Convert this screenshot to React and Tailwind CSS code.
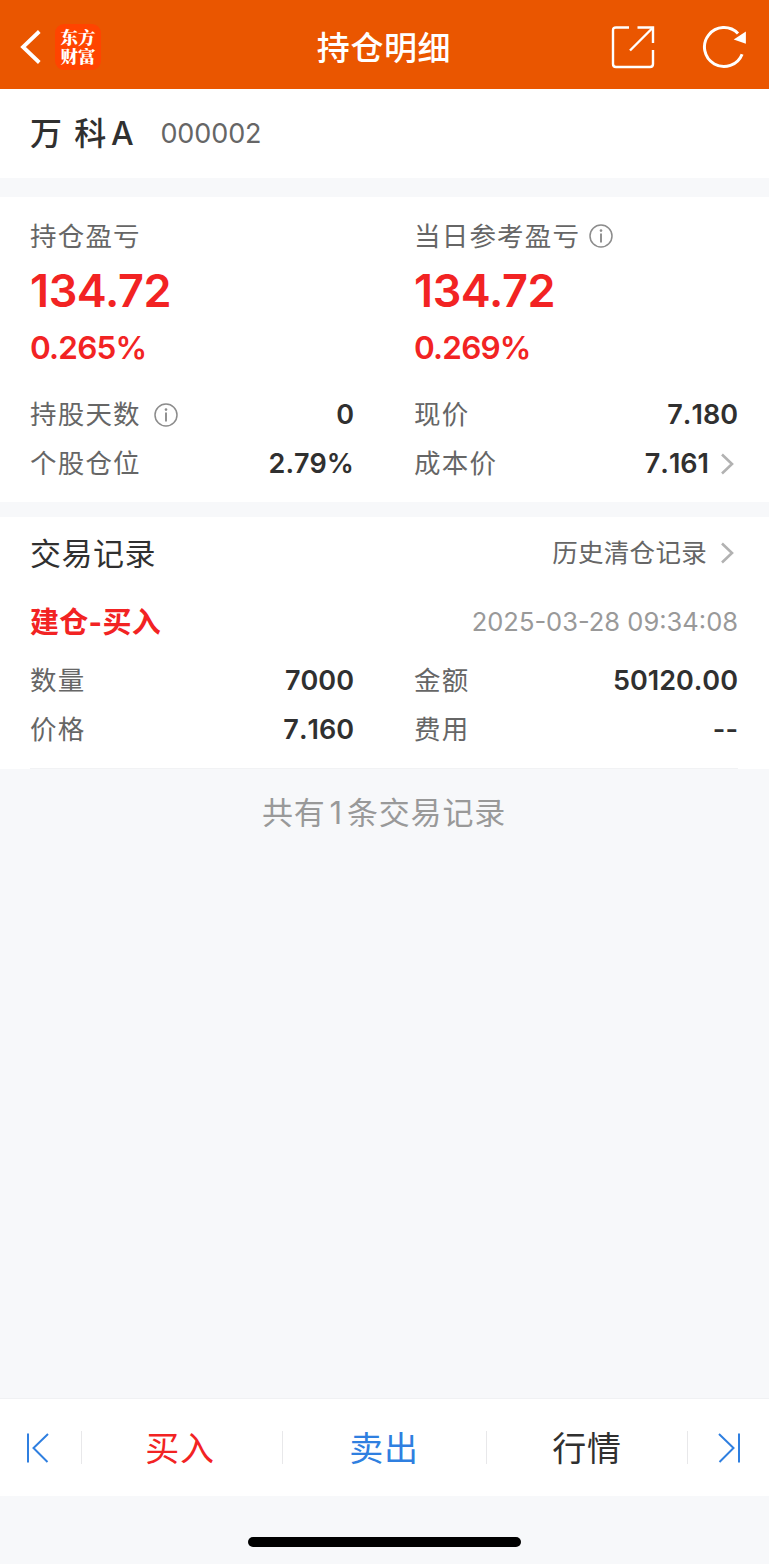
import React from "react";

function InfoIcon() {
  return (
    <svg width="24" height="24" viewBox="0 0 24 24" fill="none" className="shrink-0">
      <circle cx="12" cy="12" r="11" stroke="#8c8c8c" strokeWidth="1.5" />
      <circle cx="12" cy="6.6" r="1.3" fill="#8c8c8c" />
      <path d="M12 9.6V18.4" stroke="#8c8c8c" strokeWidth="1.9" />
    </svg>
  );
}

function Chevron() {
  return (
    <svg width="14" height="22" viewBox="0 0 14 22" fill="none" className="mr-1 shrink-0">
      <path d="M2 1.5L12 11L2 20.5" stroke="#b2b2b2" strokeWidth="2.6" />
    </svg>
  );
}

function Row({ label, value, info, chevron }) {
  return (
    <div className="flex h-[49px] items-center justify-between">
      <div className="flex items-center gap-[13px]">
        <span className="text-[26.5px] tracking-[1.2px] text-[#666]">{label}</span>
        {info && <InfoIcon />}
      </div>
      <div className="flex items-center gap-[11px]">
        <span className="text-[27px] font-semibold text-[#303030] [font-kerning:none]">{value}</span>
        {chevron && <Chevron />}
      </div>
    </div>
  );
}

function Profit({ label, amount, percent, info }) {
  return (
    <div>
      <div className="flex h-10 items-center gap-[9px]">
        <span className="text-[26.5px] tracking-[1.2px] text-[#666]">{label}</span>
        {info && <InfoIcon />}
      </div>
      <div className="flex h-[68px] items-center text-[45px] font-semibold tracking-[-0.4px] text-[#f22323]">{amount}</div>
      <div className="flex h-[48px] items-center text-[31.5px] font-semibold tracking-[-0.8px] text-[#f22323]">{percent}</div>
    </div>
  );
}

function Divider() {
  return <div className="h-[33px] w-px shrink-0 bg-[#e8e8ea]" />;
}

export default function App() {
  return (
    <div className="flex h-[1564px] w-[769px] flex-col bg-[#f7f8fa] font-['Inter','Noto_Sans_CJK_SC',sans-serif] leading-none whitespace-nowrap">
      <header className="grid h-[89px] shrink-0 grid-cols-[1fr_auto_1fr] items-center bg-[#ea5600] pt-1 pr-[21px] pl-5">
        <div className="flex items-center gap-[14px]">
          <svg width="21" height="34" viewBox="0 0 21 34" fill="none">
            <path d="M19.3 1.5L3 17L19.3 32.5" stroke="#fff" strokeWidth="3.8" />
          </svg>
          <div className="flex h-[46px] w-[46px] justify-center rounded-[9px] bg-[#ff4400] pt-[3px]">
            <span className="block w-[36px] text-center text-[17.5px] leading-[19px] font-black break-all whitespace-normal text-white font-['Noto_Serif_CJK_SC','Noto_Sans_CJK_SC',sans-serif]">
              东方财富
            </span>
          </div>
        </div>
        <h1 className="pt-[3px] text-[33px] font-medium tracking-[0.6px] text-white">持仓明细</h1>
        <div className="flex items-center justify-end gap-[47px]">
          <svg width="44" height="44" viewBox="0 0 44 44" fill="none" stroke="#fff" strokeWidth="2.4">
            <path d="M18 2.5H5Q2 2.5 2 5.500V39Q2 42 5 42H39Q42 42 42 39V25" />
            <path d="M26.500 2.500H42V18" />
            <path d="M42 2.500L19 25.500" />
          </svg>
          <svg width="46" height="44" viewBox="0 0 46 44" fill="none">
            <path d="M40.1 29.2A19.500 19.500 0 1 1 36 8.500" stroke="#fff" strokeWidth="3" />
            <path d="M43.900 6.500V18.700L31.700 14.600Z" fill="#fff" />
          </svg>
        </div>
      </header>

      <section className="flex h-[89px] shrink-0 items-center bg-white pl-[30px]">
        <span className="text-[32px] font-medium tracking-[1.8px] text-[#303030]">万 科<span className="ml-[3px]">A</span></span>
        <span className="ml-[25px] text-[27px] tracking-[-0.1px] text-[#666]">000002</span>
      </section>

      <section className="mt-[19px] h-[305px] shrink-0 bg-white px-[30px] pt-[19px]">
        <div className="grid grid-cols-[324px_324px] gap-x-[60px]">
          <Profit label="持仓盈亏" amount="134.72" percent="0.265%" />
          <Profit label="当日参考盈亏" amount="134.72" percent="0.269%" info />
        </div>
        <div className="mt-[18px] grid grid-cols-[324px_324px] gap-x-[60px]">
          <Row label="持股天数" value="0" info />
          <Row label="现价" value="7.180" />
          <Row label="个股仓位" value="2.79%" />
          <Row label="成本价" value="7.161" chevron />
        </div>
      </section>

      <section className="mt-[15px] h-[252px] shrink-0 bg-white px-[30px]">
        <div className="flex h-[72px] w-[708px] items-center justify-between">
          <h2 className="text-[31px] tracking-[0.5px] text-[#303030]">交易记录</h2>
          <div className="flex items-center gap-[13px]">
            <span className="text-[25.500px] tracking-[0.3px] text-[#666]">历史清仓记录</span>
            <Chevron />
          </div>
        </div>
        <div className="flex h-[66px] w-[708px] items-center justify-between">
          <span className="text-[29px] font-bold tracking-[0.300px] text-[#f22323]">建仓-买入</span>
          <span className="text-[25.500px] text-[#999]">2025-03-28 09:34:08</span>
        </div>
        <div className="mt-px grid grid-cols-[324px_324px] gap-x-[60px]">
          <Row label="数量" value="7000" />
          <Row label="金额" value="50120.00" />
          <Row label="价格" value="7.160" />
          <Row label="费用" value="--" />
        </div>
        <div className="mt-[14px] h-px w-[708px] bg-[#f1f2f4]" />
      </section>

      <p className="flex h-[87px] items-center justify-center pr-px text-[31px] tracking-[0.8px] text-[#999]">
        共有<span className="mx-1">1</span>条交易记录
      </p>

      <nav className="mt-auto flex h-[98px] shrink-0 items-center border-t border-[#f0f1f3] bg-white">
        <div className="flex w-[81px] justify-center">
          <svg width="24" height="32" viewBox="0 0 24 32" fill="none" stroke="#2f7fe0" strokeWidth="2" className="-ml-[6px]">
            <path d="M2 1.500V30.500M22 2L7.500 16L21.500 30" />
          </svg>
        </div>
        <Divider />
        <div className="flex w-[200px] justify-center pt-[3px] pr-1 text-[34px] tracking-[0.8px] text-[#f22323]">买入</div>
        <Divider />
        <div className="flex w-[203px] justify-center pt-[3px] pr-px text-[34px] tracking-[0.8px] text-[#2f7fe0]">卖出</div>
        <Divider />
        <div className="flex w-[200px] justify-center pt-[3px] text-[34px] tracking-[0.8px] text-[#303030]">行情</div>
        <Divider />
        <div className="flex w-[81px] justify-center">
          <svg width="24" height="32" viewBox="0 0 24 32" fill="none" stroke="#2f7fe0" strokeWidth="2">
            <path d="M22 1.500V30.500M2 2L16.500 16L2.500 30" />
          </svg>
        </div>
      </nav>
      <div className="flex h-[68px] shrink-0 justify-center pt-[41px]">
        <div className="h-[10px] w-[273px] rounded-full bg-black" />
      </div>
    </div>
  );
}
